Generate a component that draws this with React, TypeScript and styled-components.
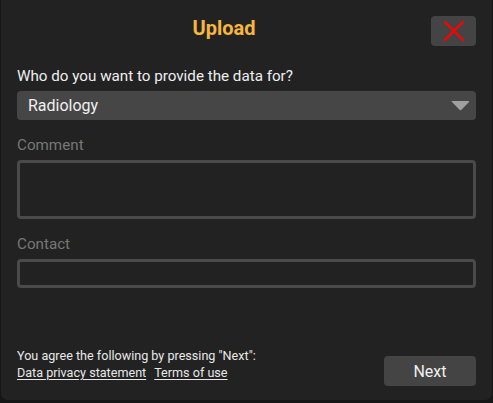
import React from "react";
import styled, { createGlobalStyle } from "styled-components";

const Global = createGlobalStyle`
  html, body { margin: 0; padding: 0; background: #161616; }
  body { font-family: Roboto, "Noto Sans", sans-serif; }
  * { box-sizing: border-box; }
`;

const Dialog = styled.div`
  margin: 0 1px;
  width: 491px;
  height: 400px;
  background: #222222;
  border-radius: 0 0 7px 7px;
  padding: 16px 16px 14px 16px;
  display: flex;
  flex-direction: column;
`;

const Header = styled.div`
  display: flex;
  align-items: center;
  height: 30px;
`;

const Title = styled.h1`
  flex: 1;
  margin: 0;
  text-align: center;
  color: #f7b63e;
  font-size: 20px;
  font-weight: 700;
  line-height: 24px;
  margin-top: -6px;
`;

const CloseButton = styled.button`
  width: 45px;
  height: 30px;
  border: none;
  border-radius: 4px;
  background: #444444;
  display: flex;
  align-items: center;
  justify-content: center;
  padding: 0;
`;

const Label = styled.div<{ $muted?: boolean }>`
  font-size: 15.2px;
  color: ${(p) => (p.$muted ? "#777777" : "#eeeeee")};
  line-height: 18px;
  margin-top: ${(p) => (p.$muted ? "16px" : "21px")};
  margin-bottom: 6px;
`;

const Select = styled.div`
  height: 29px;
  background: #464646;
  border-radius: 4px;
  display: flex;
  align-items: center;
  justify-content: space-between;
  padding: 0 6px 0 11px;
  color: #f0f0f0;
  font-size: 16px;
`;

const Field = styled.div<{ $h: number }>`
  height: ${(p) => p.$h}px;
  border: 3px solid #4a4a4a;
  border-radius: 4px;
`;

const Spacer = styled.div`
  flex: 1;
`;

const Footer = styled.div`
  display: flex;
  align-items: flex-end;
  justify-content: space-between;
`;

const Agree = styled.div`
  font-size: 12.6px;
  color: #e8e8e8;
  line-height: 17px;
  margin-bottom: 5px;
`;

const Links = styled.div`
  display: flex;
  gap: 8px;
`;

const Link = styled.a`
  color: #e8e8e8;
  text-decoration: underline;
  text-underline-offset: 2px;
`;

const NextButton = styled.button`
  width: 92px;
  height: 30px;
  border: none;
  border-radius: 4px;
  background: #444444;
  color: #f0f0f0;
  font-family: Roboto, sans-serif;
  font-size: 16px;
`;

export default function App() {
  return (
    <>
      <Global />
      <Dialog>
        <Header>
          <Title>Upload</Title>
          <CloseButton>
            <svg width="22" height="22" viewBox="0 0 22 22">
              <path d="M2 2 L20 20 M20 2 L2 20" stroke="#ff0000" strokeWidth="2.4" strokeLinecap="round" />
            </svg>
          </CloseButton>
        </Header>
        <Label>Who do you want to provide the data for?</Label>
        <Select>
          <span>Radiology</span>
          <svg width="19" height="10" viewBox="0 0 19 10">
            <path d="M0.5 1 Q0.5 0 1.5 0 L17.5 0 Q18.5 0 18 1 L10.2 9 Q9.5 9.7 8.8 9 L1 1 Z" fill="#a0a0a0" />
          </svg>
        </Select>
        <Label $muted>Comment</Label>
        <Field $h={59} />
        <Label $muted>Contact</Label>
        <Field $h={29} />
        <Spacer />
        <Footer>
          <Agree>
            <div>You agree the following by pressing "Next":</div>
            <Links>
              <Link>Data privacy statement</Link>
              <Link>Terms of use</Link>
            </Links>
          </Agree>
          <NextButton>Next</NextButton>
        </Footer>
      </Dialog>
    </>
  );
}
